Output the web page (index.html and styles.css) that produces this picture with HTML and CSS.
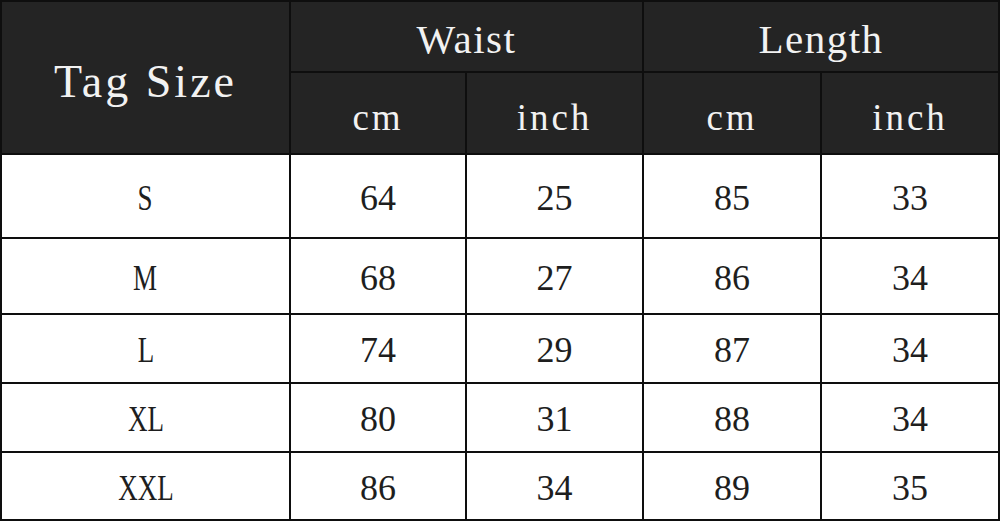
FILE: index.html
```html
<!DOCTYPE html>
<html>
<head>
<meta charset="utf-8">
<link rel="stylesheet" href="styles.css">
</head>
<body>
<table class="chart">
  <colgroup>
    <col class="c-tag">
    <col class="c-w1">
    <col class="c-w2">
    <col class="c-l1">
    <col class="c-l2">
  </colgroup>
  <thead>
    <tr class="r-h1">
      <th rowspan="2" class="tag">Tag Size</th>
      <th colspan="2" class="group">Waist</th>
      <th colspan="2" class="group">Length</th>
    </tr>
    <tr class="r-h2">
      <th class="unit">cm</th>
      <th class="unit">inch</th>
      <th class="unit">cm</th>
      <th class="unit">inch</th>
    </tr>
  </thead>
  <tbody>
    <tr class="r-s"><td><span class="size">S</span></td><td>64</td><td>25</td><td>85</td><td>33</td></tr>
    <tr class="r-m"><td><span class="size">M</span></td><td>68</td><td>27</td><td>86</td><td>34</td></tr>
    <tr class="r-l"><td><span class="size">L</span></td><td>74</td><td>29</td><td>87</td><td>34</td></tr>
    <tr class="r-xl"><td><span class="size">XL</span></td><td>80</td><td>31</td><td>88</td><td>34</td></tr>
    <tr class="r-xxl"><td><span class="size">XXL</span></td><td>86</td><td>34</td><td>89</td><td>35</td></tr>
  </tbody>
</table>
</body>
</html>
```

FILE: styles.css
```css
html, body {
  margin: 0;
  padding: 0;
  background: #ffffff;
}

.chart {
  width: 999px;
  table-layout: fixed;
  border-collapse: collapse;
  font-family: "Liberation Serif", "Times New Roman", serif;
  color: #1e1e1e;
}

.c-tag { width: 289px; }
.c-w1 { width: 176px; }
.c-w2 { width: 177px; }
.c-l1 { width: 178px; }
.c-l2 { width: 178px; }

.chart th,
.chart td {
  border: 2px solid #0e0e0e;
  padding: 0;
  text-align: center;
  vertical-align: middle;
  line-height: 1;
}

.chart th {
  background: #242424;
  color: #f2f2f2;
  font-weight: normal;
}

.chart .tag {
  font-size: 46px;
  letter-spacing: 3px;
  padding: 8px 0 0;
}

.chart .group {
  font-size: 41px;
  letter-spacing: 1.5px;
  padding: 6px 0 0;
}

.chart .unit {
  font-size: 37px;
  letter-spacing: 3px;
  padding: 8px 0 0;
}

.chart td {
  font-size: 36px;
  padding: 3px 0 0;
}

.size {
  display: inline-block;
  transform: scaleX(0.75);
}

.r-h1 { height: 71px; }
.r-h2 { height: 82px; }
.r-s { height: 84px; }
.r-m { height: 76px; }
.r-l { height: 69px; }
.r-xl { height: 69px; }
.r-xxl { height: 68px; }
```
